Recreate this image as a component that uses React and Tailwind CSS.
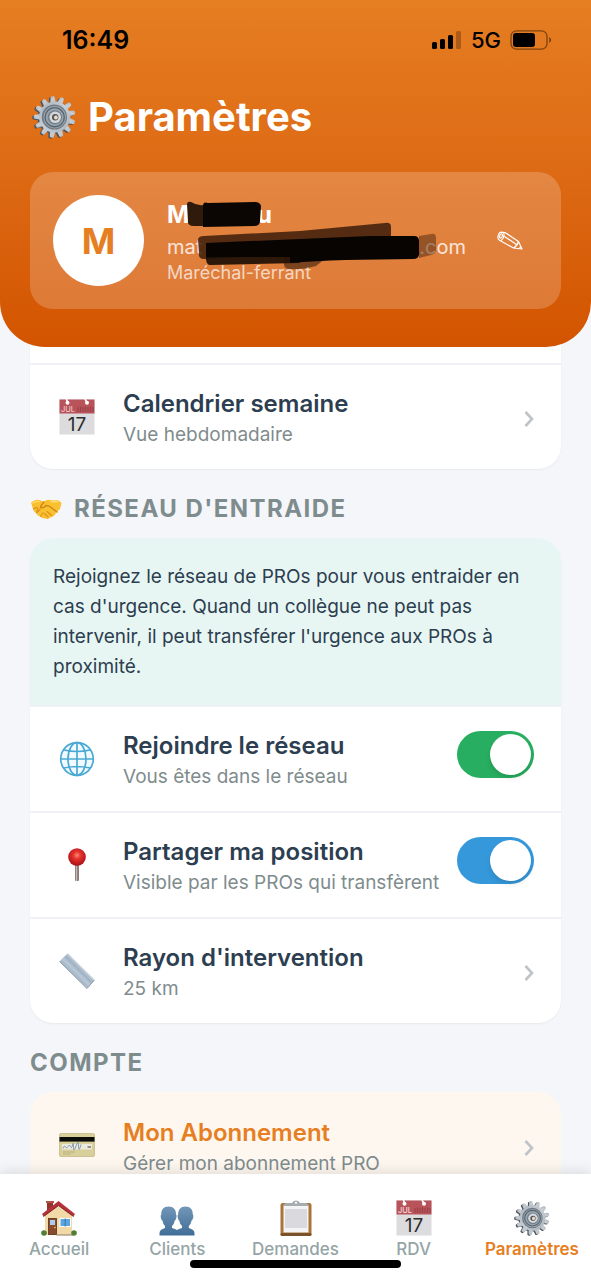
import React, { useId, useState } from "react";

function Gear({ className }) {
  const id = useId();
  return (
    <svg viewBox="0 0 44 44" className={className} aria-hidden="true">
      <defs>
        <linearGradient id={id} x1="0" y1="0" x2="1" y2="1">
          <stop offset="0" stopColor="#a9b2bb" />
          <stop offset="0.5" stopColor="#c9ced4" />
          <stop offset="1" stopColor="#aab0b8" />
        </linearGradient>
      </defs>
      {[0, 1].map((layer) => (
        <g key={layer} transform={layer ? "translate(0.6 0)" : "translate(-0.9 0.9)"} fill={layer ? `url(#${id})` : "#4d5660"}>
          {Array.from({ length: 13 }, (_, i) => (
            <path key={i} d="M19 9 L20 2.2 Q20.2 1.2 21.2 1.2 H22.8 Q23.8 1.2 24 2.2 L25 9 Z" transform={`rotate(${(i * 360) / 13 - 6} 22 22)`} />
          ))}
          <circle cx="22" cy="22" r="15.6" />
        </g>
      ))}
      <circle cx="22.4" cy="22" r="12.6" fill="#6f7a84" />
      <circle cx="22.7" cy="22.2" r="11.2" fill="#9aa6b0" />
      <circle cx="22.7" cy="22.2" r="9.6" fill="none" stroke="#59646e" strokeWidth="1.4" />
      <circle cx="22.9" cy="22.4" r="7.2" fill="#74808b" />
      <circle cx="23.2" cy="22.3" r="5.8" fill="#d4d8dc" />
      <circle cx="23.2" cy="22.3" r="3.2" fill="#5a5652" />
      <circle cx="23.9" cy="22.5" r="1.9" fill="#e8dccf" />
    </svg>
  );
}

function CalendarIcon({ className }) {
  return (
    <svg viewBox="0 0 36 36" className={className} aria-hidden="true">
      <rect x="0.5" y="0.5" width="35" height="35" fill="#dcdcde" />
      <rect x="0.5" y="0.5" width="35" height="14" fill="#b9535a" />
      <path d="M19 8v5M21.500 7.500v5.500M24 8v5M26.500 7.500v5.500M29 8v5M31.500 7.500v5.500M34 8v5" stroke="#9c4048" strokeWidth="1.200" />
      <circle cx="8.500" cy="3.800" r="2" fill="#fff" />
      <circle cx="28" cy="3.800" r="2" fill="#fff" />
      <path d="M8.500 3.500L7.500 0M28 3.500L26 0" stroke="#fff" strokeWidth="1.600" />
      <text x="2" y="12.500" fontFamily="Inter, sans-serif" fontSize="7.500" fill="#f3d9da">JUL</text>
      <text x="18" y="32" textAnchor="middle" fontFamily="Inter, sans-serif" fontSize="19" fontWeight="400" fill="#2c2c2e">17</text>
    </svg>
  );
}

function Handshake({ className }) {
  return (
    <svg viewBox="0 0 32 22" className={className} aria-hidden="true">
      <path d="M1 4.500Q5 1 9 2L14 3.500Q17 1 20 2L24 2.500Q28 0.500 31.500 5L30 11Q28 13 26 15Q24 19 20 19.500Q18 22 15.500 20.500Q12 21 10.500 18.500Q7 18 6.500 15Q3.500 14 3 11Z" fill="#fbc02f" />
      <path d="M14 4Q11 7 10.500 9.500Q13 11 16 7.500L19 8L27 14" fill="none" stroke="#c98516" strokeWidth="1.300" strokeLinecap="round" />
      <path d="M17 13.500l4.500 4M14.500 15.500l3.500 3.500M3.500 11Q6 9 8 10Q7 13 6.500 15M10.500 18.500L13 14.500M6.500 15L10 11.500" fill="none" stroke="#d9931d" strokeWidth="1.100" strokeLinecap="round" />
      <path d="M3 5Q6 2.800 9 3.600M21 3.600Q25 4 28 3.400" fill="none" stroke="#ffe071" strokeWidth="1.300" strokeLinecap="round" />
    </svg>
  );
}

function Globe({ className }) {
  return (
    <svg viewBox="0 0 36 36" className={className} aria-hidden="true">
      <circle cx="18" cy="18" r="16.500" fill="#f1fafe" />
      <g fill="none" stroke="#4aa9d4" strokeWidth="1.700">
        <circle cx="18" cy="18" r="16.300" />
        <path d="M18 2V34M2 18H34M5 9Q18 12 31 9M5 27Q18 24 31 27" />
        <ellipse cx="18" cy="18" rx="9" ry="16.300" />
      </g>
    </svg>
  );
}

function Pin({ className }) {
  return (
    <svg viewBox="0 0 36 36" className={className} aria-hidden="true">
      <defs>
        <radialGradient id="pin-head" cx="0.5" cy="0.4" r="0.6">
          <stop offset="0" stopColor="#ff8a76" />
          <stop offset="0.35" stopColor="#e6342e" />
          <stop offset="1" stopColor="#a90f16" />
        </radialGradient>
      </defs>
      <rect x="16" y="17" width="4" height="17" rx="1" fill="#8d7d78" />
      <path d="M17.500 19v15" stroke="#c7bbb6" strokeWidth="1.200" />
      <circle cx="18" cy="10" r="8.800" fill="url(#pin-head)" />
    </svg>
  );
}

function Ruler({ className }) {
  return (
    <svg viewBox="0 0 36 36" className={className} aria-hidden="true">
      <path d="M0.500 8.500L8.500 0.500L35.500 27L28 35.500Z" fill="#a9bacb" />
      <path d="M3.500 5.500L31 32.500" stroke="#b7c6d5" strokeWidth="3" />
      <path d="M8.500 0.800L35 27" stroke="#c9d5e0" strokeWidth="1.500" />
      <path d="M6 3L33 30" stroke="#98abbd" strokeWidth="0.800" />
      <path d="M0.500 8.500L28 35.500L35.500 27" fill="none" stroke="#8d9fb1" strokeWidth="1" />
    </svg>
  );
}

function Card({ className }) {
  return (
    <svg viewBox="0 0 36 36" className={className} aria-hidden="true">
      <rect x="0.500" y="5.500" width="35" height="23" rx="1.500" fill="#d9cf9a" stroke="#c4ba8a" strokeWidth="0.800" />
      <rect x="0.500" y="9" width="35" height="4.600" fill="#0c0c08" />
      <rect x="3" y="16" width="30" height="5.500" fill="#ece9dd" />
      <path d="M4 20.500q1.500-4 2.500-1.500t2.500-.5t2.500 0t2-1.500t1 2t2.500-1t2.500 0t2.500-1.500" fill="none" stroke="#7f93b0" strokeWidth="0.900" />
      <path d="M28.500 19h3.500" stroke="#3c3c3c" strokeWidth="1.200" />
      <path d="M4 24h12M4 26h8" stroke="#b3a975" strokeWidth="0.800" />
    </svg>
  );
}

function House({ className }) {
  return (
    <svg viewBox="0 0 36 36" className={className} aria-hidden="true">
      <rect x="6" y="1.500" width="6" height="12" fill="#93332e" />
      <rect x="5" y="1" width="8" height="2" fill="#b4524a" />
      <path d="M4 15L17.500 4L31 15V35H4Z" fill="#f2d9a8" />
      <path d="M17.500 1L34 14L32.500 16.500L17.500 5.500L2.500 16.500L1 14Z" fill="#b5323a" />
      <path d="M2.500 16.500L17.500 5.500L32.500 16.500" fill="none" stroke="#7d1e26" strokeWidth="1" />
      <rect x="7.500" y="18.500" width="8" height="16" fill="#8a4b2c" stroke="#5e2f1a" strokeWidth="0.800" />
      <rect x="9" y="20" width="5" height="5" fill="#a9cdec" />
      <circle cx="14" cy="27.500" r="0.800" fill="#f5d06b" />
      <rect x="19" y="18.500" width="10.500" height="8" fill="#5aa7e0" stroke="#fff" strokeWidth="1" />
      <path d="M24.200 18.500v8" stroke="#39719f" strokeWidth="1" />
      <circle cx="3" cy="33" r="2.800" fill="#4f7f35" />
      <circle cx="33" cy="33" r="2.800" fill="#4f7f35" />
      <path d="M15.500 35h17" stroke="#8f7a5a" strokeWidth="1" />
    </svg>
  );
}

function People({ className }) {
  return (
    <svg viewBox="0 0 36 36" className={className} aria-hidden="true">
      <defs>
        <linearGradient id="people-fill" gradientUnits="userSpaceOnUse" x1="0" y1="6" x2="0" y2="36">
          <stop offset="0" stopColor="#7397b8" />
          <stop offset="1" stopColor="#3f6d97" />
        </linearGradient>
      </defs>
      <g fill="url(#people-fill)">
        <path d="M9.500 6.500C14.500 6.500 17.200 9.500 17 14.500Q18 15 17.400 17.500T15.800 20.500Q15.200 24 13 26V28Q16.500 29 18 30Q19.500 29 23 28V26Q20.800 24 20.200 20.500Q19.200 20 18.700 17.500T19.200 14.500C19 9.500 21.700 6.500 26.500 6.500S34 9.500 33.800 14.500Q34.800 15 34.200 17.500T32.600 20.500Q32 24 29.800 26V28Q35.500 29.500 35.500 33V35.500H0.500V33Q0.500 29.500 6 28V26Q4 24 3.400 20.500Q2.300 20 1.800 17.500T2.300 14.500C2 9.500 4.700 6.500 9.500 6.500Z" />
      </g>
    </svg>
  );
}

function Clipboard({ className }) {
  return (
    <svg viewBox="0 0 36 36" className={className} aria-hidden="true">
      <rect x="2.500" y="3" width="31" height="33" rx="2" fill="#a97538" />
      <rect x="2.500" y="33" width="31" height="3" rx="1.500" fill="#7a522a" />
      <rect x="5.500" y="5.500" width="25" height="27" fill="#f4f4f6" />
      <rect x="7" y="9" width="22" height="19" fill="#d9d9de" />
      <path d="M5.500 4.500Q6 3 9 3H14Q15 0.500 18 0.500T22 3H27Q30 3 30.500 4.500V6H5.500Z" fill="#a6adb0" />
      <circle cx="18" cy="2.800" r="1.100" fill="#fff" />
    </svg>
  );
}

function Pencil({ className }) {
  return (
    <svg viewBox="0 0 26 20" className={className} fill="none" stroke="#fff" strokeWidth="1.200" strokeLinejoin="round" aria-hidden="true">
      <path d="M4.500 1.200L8 1.500L21.500 10.500L25 18L16.500 17L2.500 9.300Q0.200 7.500 1.200 4.500Q2 1.500 4.500 1.200Z" />
      <path d="M6.500 1.500Q8.500 5.500 4 9.800M7.500 5.500L19.500 13.500M21.500 10.500Q20.500 14.500 16.500 17M23.600 15.500L22.600 17.500" />
      <ellipse cx="4" cy="5" rx="1.300" ry="2.200" transform="rotate(25 4 5)" />
    </svg>
  );
}

function Chevron() {
  return (
    <svg viewBox="0 0 10 16" className="mt-1 h-4 w-[10px] shrink-0" fill="none" stroke="#bdc3c7" strokeWidth="2.600" aria-hidden="true">
      <path d="M1.500 1L8 8L1.500 15" />
    </svg>
  );
}

function Row({ icon: Icon, title, subtitle, titleClass = "text-[#2c3e50]", children }) {
  const body = (
    <>
      <span className="flex w-12 shrink-0 justify-center">
        <Icon className="h-9 w-9" />
      </span>
      <span className="ml-[22px] min-w-0 flex-1 whitespace-nowrap">
        <span className={`block text-2xl leading-9 font-semibold ${titleClass}`}>{title}</span>
        <span className="block text-[19px] leading-[26px] text-[#7f8c8d]">{subtitle}</span>
      </span>
    </>
  );
  const cls = "flex w-full items-center border-t-2 border-[#f0f1f4] py-[21px] pr-[27px] pl-[23px] text-left";
  return children ? (
    <label className={cls}>
      {body}
      {children}
    </label>
  ) : (
    <button type="button" className={cls}>
      {body}
      <Chevron />
    </button>
  );
}

function Toggle({ colorClass }) {
  const [on, setOn] = useState(true);
  return (
    <input
      type="checkbox"
      role="switch"
      checked={on}
      onChange={() => setOn(!on)}
      className={`mt-[3px] flex h-[47px] w-[77px] shrink-0 appearance-none items-center self-start rounded-full bg-gray-300 px-[3px] before:h-[41px] before:w-[41px] before:rounded-full before:bg-white before:shadow-md checked:justify-end ${colorClass}`}
    />
  );
}

function Scribbles() {
  return (
    <svg viewBox="167 198 280 86" className="pointer-events-none absolute top-0 left-0 h-[86px] w-[280px]" aria-hidden="true">
      <path d="M187 205Q187 201 191 202Q197 206 204 205V226H194Q187 226 188 220Z" fill="#160b04" opacity="0.88" />
      <path d="M203 206Q203 201 208 203L255 202Q260 202 261 206L260 221Q260 226 254 226L203 227Z" fill="#0b0603" />
      <path d="M198 240Q198 236 204 236L300 231L385 223Q391 222 391 227V240L300 254L204 259Q198 259 199 253Z" fill="#3c1d0a" opacity="0.85" />
      <path d="M206 252H300V263L210 265Q207 265 206 260Z" fill="#1a0d05" opacity="0.9" />
      <path d="M419 236L431 234Q436 233 436 238V250Q436 254 431 255L419 258Z" fill="#5a2e12" opacity="0.55" />
      <path d="M284 255H330L316 266Q300 270 288 269Q284 268 284 264Z" fill="#2a1407" opacity="0.55" />
      <path d="M206 243L300 239L370 236H414Q419 236 419 241V254Q419 259 413 259L345 260Q315 261 290 263V257H206Z" fill="#070402" />
    </svg>
  );
}

function SectionTitle({ icon: Icon, children }) {
  return (
    <h2 className="flex items-center gap-3 pt-[26px] pb-[15px] text-2xl leading-7 font-bold tracking-[0.06em] text-[#7f8c8d]">
      {Icon && <Icon className="h-[22px] w-8" />}
      {children}
    </h2>
  );
}

const tabs = [
  { label: "Accueil", icon: House },
  { label: "Clients", icon: People },
  { label: "Demandes", icon: Clipboard },
  { label: "RDV", icon: CalendarIcon },
  { label: "Paramètres", icon: Gear, active: true },
];

export default function App() {
  return (
    <div className="flex h-screen flex-col overflow-hidden bg-[#f4f6fa] font-['Inter','Liberation_Sans',sans-serif]">
      <header className="relative z-10 shrink-0 rounded-b-[45px] bg-linear-to-b from-[#e67e22] to-[#d35400] px-[30px] pb-[38px]">
        <div className="flex items-center justify-between pt-6 pr-[9px] pl-8 text-black">
          <span className="text-[25px] leading-8 font-semibold">16:49</span>
          <div className="flex items-center gap-[9px]">
            <svg viewBox="0 0 30 20" className="h-5 w-[30px]" aria-hidden="true">
              <rect x="0" y="12" width="5" height="7" rx="1.500" />
              <rect x="8" y="9" width="5" height="10" rx="1.500" />
              <rect x="16" y="5" width="5" height="14" rx="1.500" />
              <rect x="24" y="1" width="5" height="18" rx="1.500" opacity="0.25" />
            </svg>
            <span className="text-[22px] leading-7 font-medium">5G</span>
            <svg viewBox="0 0 42 20" className="h-5 w-[42px]" aria-hidden="true">
              <rect x="1" y="0.800" width="36" height="18.400" rx="5.500" fill="none" stroke="#000" strokeOpacity="0.450" strokeWidth="1.300" />
              <rect x="3" y="3" width="22" height="14" rx="3" />
              <path d="M39.200 7Q41.200 8 41.200 10T39.200 13Z" opacity="0.450" />
            </svg>
          </div>
        </div>
        <h1 className="mt-9 flex items-center gap-3 text-[40px] leading-[50px] font-bold text-white">
          <Gear className="ml-[2px] h-11 w-11" />
          Paramètres
        </h1>
        <section className="mt-[30px] flex items-center rounded-[23px] bg-white/20 p-[23px]">
          <div className="flex h-[91px] w-[91px] shrink-0 items-center justify-center rounded-full bg-white text-4xl font-bold text-[#e67e22]">M</div>
          <div className="relative ml-[23px] min-w-0 flex-1 text-white">
            <p className="flex w-[105px] justify-between text-2xl leading-[34px] font-bold">
              <span>M</span>
              <span>u</span>
            </p>
            <p className="flex w-[299px] justify-between text-xl leading-[30px] text-white/80">
              <span>mat</span>
              <span>.com</span>
            </p>
            <p className="text-lg leading-[22px] text-white/70">Maréchal-ferrant</p>
            <Scribbles />
          </div>
          <button type="button" aria-label="Modifier le profil" className="flex h-14 w-14 shrink-0 items-center justify-center">
            <Pencil className="h-5 w-[26px]" />
          </button>
        </section>
      </header>

      <main className="-mt-[45px] min-h-0 flex-1 overflow-hidden px-[30px]">
        <div className="overflow-hidden rounded-b-[23px] bg-white pt-[61px] shadow-xs">
          <Row icon={CalendarIcon} title="Calendrier semaine" subtitle="Vue hebdomadaire" />
        </div>

        <SectionTitle icon={Handshake}>RÉSEAU D'ENTRAIDE</SectionTitle>
        <div className="overflow-hidden rounded-[23px] bg-white shadow-xs">
          <p className="bg-[#e8f6f3] px-[23px] pt-6 pb-[23px] text-[19px] leading-[30px] text-[#2c3e50]">
            Rejoignez le réseau de PROs pour vous entraider en cas d'urgence. Quand un collègue ne peut pas intervenir, il peut transférer l'urgence aux PROs à proximité.
          </p>
          <Row icon={Globe} title="Rejoindre le réseau" subtitle="Vous êtes dans le réseau">
            <Toggle colorClass="checked:bg-[#27ae60]" />
          </Row>
          <Row icon={Pin} title="Partager ma position" subtitle="Visible par les PROs qui transfèrent">
            <Toggle colorClass="checked:bg-[#3498db]" />
          </Row>
          <Row icon={Ruler} title="Rayon d'intervention" subtitle="25 km" />
        </div>

        <SectionTitle>COMPTE</SectionTitle>
        <div className="overflow-hidden rounded-t-[23px] bg-[#fef7f0] [&>button]:border-transparent">
          <Row icon={Card} title="Mon Abonnement" titleClass="text-[#e67e22]" subtitle="Gérer mon abonnement PRO" />
        </div>
      </main>

      <nav className="relative z-10 shrink-0 bg-white pt-[26px] pb-3 shadow-[0_-3px_12px_rgba(0,0,0,0.1)]">
        <ul className="flex">
          {tabs.map(({ label, icon: Icon, active }) => (
            <li key={label} className="w-0 flex-1">
              <a
                href={`#${label}`}
                aria-current={active ? "page" : undefined}
                className={`flex flex-col items-center gap-[2px] text-[17px] leading-[22px] whitespace-nowrap ${active ? "font-semibold text-[#e67e22]" : "font-medium text-[#95a5a6]"}`}
              >
                <Icon className="h-9 w-9" />
                {label}
              </a>
            </li>
          ))}
        </ul>
        <div className="mx-auto h-2 w-[211px] rounded-full bg-black" />
      </nav>
    </div>
  );
}
